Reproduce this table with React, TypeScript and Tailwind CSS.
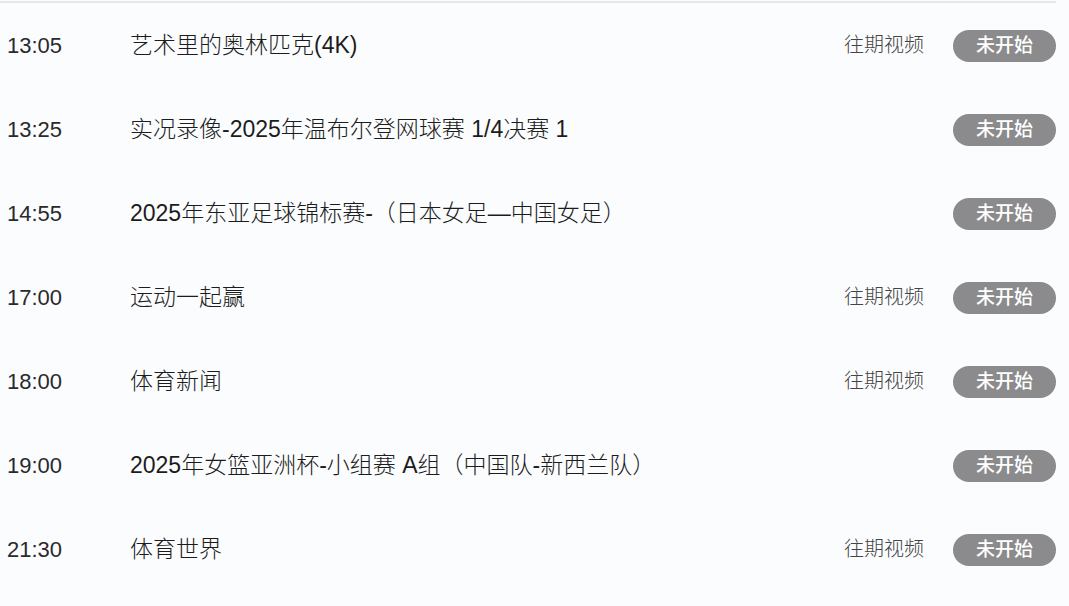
const rows = [
  { time: '13:05', title: '艺术里的奥林匹克(4K)', replay: true },
  { time: '13:25', title: '实况录像-2025年温布尔登网球赛 1/4决赛 1', replay: false },
  { time: '14:55', title: '2025年东亚足球锦标赛-（日本女足—中国女足）', replay: false },
  { time: '17:00', title: '运动一起赢', replay: true },
  { time: '18:00', title: '体育新闻', replay: true },
  { time: '19:00', title: '2025年女篮亚洲杯-小组赛 A组（中国队-新西兰队）', replay: false },
  { time: '21:30', title: '体育世界', replay: true },
];

export default function App() {
  return (
    <div
      className="w-[1069px] h-[606px] overflow-hidden bg-[#fbfcfe] pt-px"
      style={{ fontFamily: '"Liberation Sans", "Noto Sans CJK SC", sans-serif' }}
    >
      <div className="w-[1056px] border-t-2 border-[#e6e7ea]">
        {rows.map((row) => (
          <div key={row.time} className="flex h-[84px] items-center">
            <div className="w-[130px] pl-[7px] text-[22px] text-[#2a2a2a]">{row.time}</div>
            <div className="flex-1 text-[23px] font-light text-[#1c1c1c]">{row.title}</div>
            {row.replay && (
              <div className="mr-[29px] text-[20px] font-light text-[#444]">往期视频</div>
            )}
            <div className="mt-[2px] flex h-[32px] w-[103px] items-center justify-center rounded-full bg-[#8b8b8d] text-[19px] font-medium text-white">
              未开始
            </div>
          </div>
        ))}
      </div>
    </div>
  );
}
